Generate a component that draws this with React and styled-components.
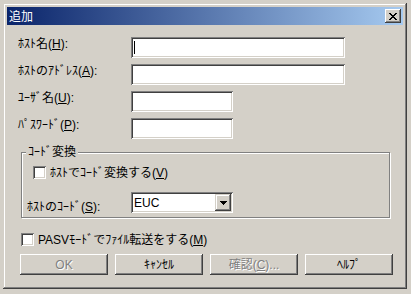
import React from "react";
import styled, { createGlobalStyle } from "styled-components";

const GlobalStyle = createGlobalStyle`
  html, body {
    margin: 0;
    background: #d4d0c8;
  }
  body {
    font-family: "Liberation Sans", "Noto Sans CJK JP", sans-serif;
    font-size: 12px;
    color: #000;
  }
  #root {
    padding: 3px 0 0 3px;
  }
`;

const Window = styled.div`
  width: 404px;
  height: 286px;
  box-sizing: border-box;
  padding: 4px;
  background: #d4d0c8;
  box-shadow: inset -1px -1px 0 #404040, inset 1px 1px 0 #d4d0c8,
    inset -2px -2px 0 #808080, inset 2px 2px 0 #fff;
  display: flex;
  flex-direction: column;
`;

const TitleBar = styled.div`
  height: 18px;
  display: flex;
  align-items: center;
  justify-content: space-between;
  padding-left: 2px;
  background: linear-gradient(to right, #0a246a, #a6caf0);
`;

const TitleText = styled.span`
  color: #fff;
  font-family: "Noto Sans CJK JP", sans-serif;
  font-size: 12px;
  line-height: 14px;
`;

const CloseButton = styled.div`
  width: 16px;
  height: 14px;
  margin-right: 2px;
  box-sizing: border-box;
  display: flex;
  align-items: center;
  justify-content: center;
  background: #d4d0c8;
  box-shadow: inset -1px -1px 0 #404040, inset 1px 1px 0 #fff,
    inset -2px -2px 0 #808080;
`;

const Body = styled.div`
  display: flex;
  flex-direction: column;
  padding-top: 12px;
`;

const FormGrid = styled.div`
  display: grid;
  grid-template-columns: 113px max-content;
  grid-auto-rows: 21px;
  row-gap: 6px;
  margin-left: 11px;
`;

const Label = styled.span`
  align-self: start;
  line-height: 14px;
  margin-top: ${(p) => p.$offset || 0}px;
  white-space: nowrap;
`;

const sunken = `
  background: #fff;
  box-shadow: inset 1px 1px 0 #808080, inset -1px -1px 0 #fff,
    inset 2px 2px 0 #404040, inset -2px -2px 0 #d4d0c8;
`;

const Field = styled.div`
  width: ${(p) => p.$width}px;
  height: 21px;
  box-sizing: border-box;
  display: flex;
  align-items: center;
  padding-left: 3px;
  ${sunken}
`;

const Caret = styled.span`
  width: 1px;
  height: 13px;
  background: #000;
`;

const GroupBox = styled.div`
  position: relative;
  width: 369px;
  height: 66px;
  box-sizing: border-box;
  margin: 13px 0 0 14px;
  padding: 13px 0 0 5px;
  border: 1px solid #808080;
  box-shadow: 1px 1px 0 #fff, inset 1px 1px 0 #fff;
  display: flex;
  flex-direction: column;
`;

const Legend = styled.span`
  position: absolute;
  top: -8px;
  left: 4px;
  padding: 0 2px;
  line-height: 14px;
  background: #d4d0c8;
`;

const CheckRow = styled.label`
  display: flex;
  align-items: center;
  gap: 4px;
  height: 13px;
  margin: ${(p) => p.$margin};
  line-height: 14px;
  white-space: nowrap;
`;

const CheckBox = styled.span`
  width: 13px;
  height: 13px;
  flex: none;
  box-sizing: border-box;
  ${sunken}
`;

const CodeRow = styled.div`
  display: grid;
  grid-template-columns: 104px 102px;
  height: 21px;
  margin-top: 13px;
`;

const Combo = styled.div`
  height: 21px;
  box-sizing: border-box;
  padding: 2px;
  display: flex;
  align-items: center;
  ${sunken}
`;

const ComboText = styled.span`
  flex: 1;
  padding-left: 1px;
  font-family: "Liberation Sans", sans-serif;
  line-height: 14px;
`;

const ComboButton = styled.span`
  width: 16px;
  height: 17px;
  box-sizing: border-box;
  display: flex;
  align-items: center;
  justify-content: center;
  background: #d4d0c8;
  box-shadow: inset -1px -1px 0 #404040, inset 1px 1px 0 #d4d0c8,
    inset -2px -2px 0 #808080, inset 2px 2px 0 #fff;
`;

const ButtonRow = styled.div`
  display: flex;
  gap: 7px;
  margin: 8px 0 0 13px;
`;

const Button = styled.div`
  width: 88px;
  height: 21px;
  box-sizing: border-box;
  display: flex;
  align-items: center;
  justify-content: center;
  line-height: 14px;
  background: #d4d0c8;
  color: ${(p) => (p.$disabled ? "#808080" : "#000")};
  text-shadow: ${(p) => (p.$disabled ? "1px 1px 0 #fff" : "none")};
  box-shadow: inset -1px -1px 0 #404040, inset 1px 1px 0 #fff,
    inset -2px -2px 0 #808080, inset 2px 2px 0 #d4d0c8;
`;

const CloseIcon = () => (
  <svg width="8" height="7" viewBox="0 0 8 7" shapeRendering="crispEdges">
    {[0, 1, 2, 3, 4, 5, 6].map((i) => (
      <g key={i} fill="#000">
        <rect x={i} y={i} width="2" height="1" />
        <rect x={6 - i} y={i} width="2" height="1" />
      </g>
    ))}
  </svg>
);

const DownArrow = () => (
  <svg width="7" height="4" viewBox="0 0 7 4" shapeRendering="crispEdges">
    <polygon points="0,0 7,0 3.5,4" fill="#000" />
  </svg>
);

export default function App() {
  return (
    <>
      <GlobalStyle />
      <Window>
        <TitleBar>
          <TitleText>追加</TitleText>
          <CloseButton>
            <CloseIcon />
          </CloseButton>
        </TitleBar>
        <Body>
          <FormGrid>
            <Label>
              ﾎｽﾄ名(<u>H</u>):
            </Label>
            <Field $width={214}>
              <Caret />
            </Field>
            <Label>
              ﾎｽﾄのｱﾄﾞﾚｽ(<u>A</u>):
            </Label>
            <Field $width={214} />
            <Label>
              ﾕｰｻﾞ名(<u>U</u>):
            </Label>
            <Field $width={102} />
            <Label>
              ﾊﾟｽﾜｰﾄﾞ(<u>P</u>):
            </Label>
            <Field $width={102} />
          </FormGrid>

          <GroupBox>
            <Legend>ｺｰﾄﾞ変換</Legend>
            <CheckRow $margin="0 0 0 6px">
              <CheckBox />
              <span>
                ﾎｽﾄでｺｰﾄﾞ変換する(<u>V</u>)
              </span>
            </CheckRow>
            <CodeRow>
              <Label $offset={8}>
                ﾎｽﾄのｺｰﾄﾞ(<u>S</u>):
              </Label>
              <Combo>
                <ComboText>EUC</ComboText>
                <ComboButton>
                  <DownArrow />
                </ComboButton>
              </Combo>
            </CodeRow>
          </GroupBox>

          <CheckRow $margin="15px 0 0 14px">
            <CheckBox />
            <span>
              PASVﾓｰﾄﾞでﾌｧｲﾙ転送をする(<u>M</u>)
            </span>
          </CheckRow>

          <ButtonRow>
            <Button $disabled>OK</Button>
            <Button>ｷｬﾝｾﾙ</Button>
            <Button $disabled>
              確認(<u>C</u>)...
            </Button>
            <Button>ﾍﾙﾌﾟ</Button>
          </ButtonRow>
        </Body>
      </Window>
    </>
  );
}
